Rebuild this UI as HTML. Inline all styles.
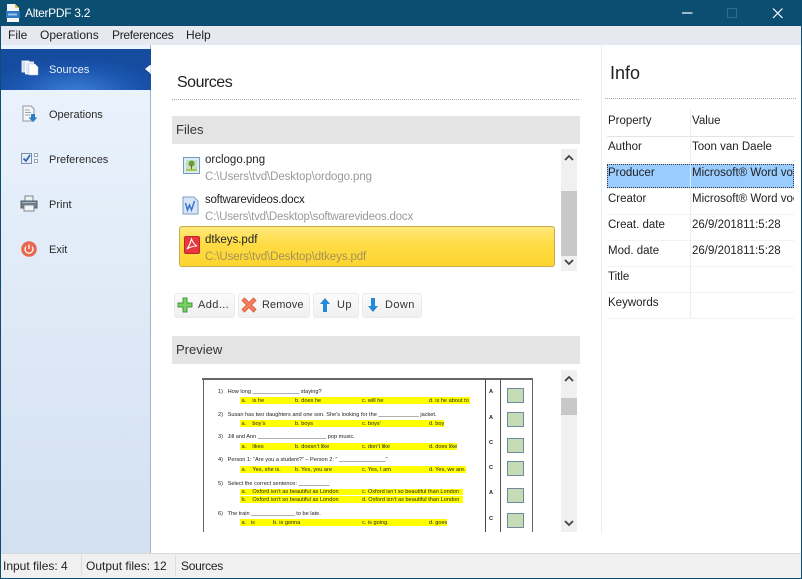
<!DOCTYPE html>
<html><head><meta charset="utf-8"><style>
html,body{margin:0;padding:0;width:802px;height:579px;overflow:hidden;background:#fff}
body{position:relative;font-family:"Liberation Sans",sans-serif;font-size:12px;color:#222}
.a{position:absolute;white-space:nowrap}
.nav{left:49px;font-size:11px;line-height:14px;color:#2a2a2a;margin-top:1px}
.m{top:28px;font-size:12px;line-height:15px;color:#222}
.hd{left:172px;width:408px;height:28px;background:#e4e4e4;font-size:13px;line-height:28px;text-indent:4px;color:#333}
.fn{left:205px;font-size:11.500px;line-height:15px;color:#222;margin-top:1px}
.gr{left:205px;color:#9a9a9a;font-size:11.500px;letter-spacing:-.1px;line-height:14px;margin-top:1px}
.btn{top:293px;height:25px;background:linear-gradient(#fbfbfb,#f0f0f0);border:1px solid #ebebeb;border-radius:3px;box-sizing:border-box}
.bt{top:298px;font-size:11px;line-height:14px;letter-spacing:.4px;color:#333}
.cell{font-size:11.500px;color:#222;line-height:26px;height:26px;margin-top:1px}
.hl{position:absolute;height:6.500px;background:#ffff00}
.q{position:absolute;font-size:5.600px;line-height:7px;color:#222;white-space:nowrap;margin-top:1px}
.sq{position:absolute;left:507px;width:15px;height:13px;background:#c6dcb6;border:1px solid #6f8a9c}
.sb{background:#f0f0f0;left:561px;width:16px}
.st{top:559px;font-size:12px;line-height:15px;color:#222}
</style></head><body>
<!-- title -->
<div class="a" style="left:0;top:0;width:802px;height:26px;background:#0b4e72"></div>
<svg class="a" style="left:5px;top:3px" width="16" height="20" viewBox="0 0 16 20"><path d="M2 1h8l4 4v14H2z" fill="#f4f6f8"/><path d="M10 1l4 4h-4z" fill="#f0c64a"/><rect x="1" y="8" width="14" height="7" fill="#2f78c4"/><rect x="3" y="10.500" width="9" height="2" fill="#9cc4ea"/></svg>
<div class="a" style="left:25px;top:4px;color:#fff;font-size:12px;line-height:18px;letter-spacing:-.3px">AlterPDF 3.2</div>
<svg class="a" style="left:670px;top:0" width="132" height="26"><path d="M12 13h10.500" stroke="#fff" stroke-width="1.200"/><rect x="57.500" y="8.500" width="9" height="9" fill="none" stroke="#2f6d8f"/><path d="M103 8.500l9.500 9.500M112.500 8.500l-9.500 9.500" stroke="#fff" stroke-width="1.200"/></svg>
<!-- menu -->
<div class="a" style="left:0;top:26px;width:802px;height:19px;background:#e7e9f1"></div>
<div class="a m" style="left:8px">File</div>
<div class="a m" style="left:40px">Operations</div>
<div class="a m" style="left:112px;letter-spacing:-.3px">Preferences</div>
<div class="a m" style="left:186px">Help</div>
<!-- sidebar -->
<div class="a" style="left:0;top:45px;width:150px;height:508px;background:linear-gradient(#ecf4fd,#d2e0f1)"></div>
<div class="a" style="left:150px;top:45px;width:1px;height:508px;background:#a3b5c9"></div>
<div class="a" style="left:0;top:49px;width:151px;height:41px;background:radial-gradient(ellipse 90px 36px at 75px 44px,#3f80d8,#1a55ae 70%,#164c9f)"></div>
<div class="a" style="left:145px;top:65px;width:0;height:0;border:4px solid transparent;border-right:5px solid #fff;border-left:0"></div>
<div class="a" style="left:150px;top:65px;width:1px;height:9px;background:#cfe0f5"></div>
<svg class="a" style="left:21px;top:60px" width="18" height="17"><rect x="1" y="1" width="7" height="11" fill="#cfdcec" stroke="#fff" stroke-width=".8"/><rect x="4.500" y="2" width="8" height="12" fill="#e0e8f4" stroke="#fff" stroke-width=".8"/><path d="M8 4h6l3 3v8H8z" fill="#fff" stroke="#b9c8da" stroke-width=".5"/></svg>
<div class="a nav" style="top:62px;color:#e8f0fb">Sources</div>
<svg class="a" style="left:21px;top:105px" width="18" height="18"><path d="M2 1h8l3 3v12H2z" fill="#f4f6f8" stroke="#8d97a3"/><path d="M4 5h5M4 7.500h6M4 10h5" stroke="#9aa6b3"/><path d="M10 9h4v3.500h2.500L12 17l-4.500-4.500H10z" fill="#2d7cc2"/></svg>
<div class="a nav" style="top:107px">Operations</div>
<svg class="a" style="left:21px;top:152px" width="18" height="14"><rect x=".5" y="1.500" width="10" height="10" fill="#e6eef8" stroke="#7b8ea3"/><path d="M2.500 6.500l2.500 2.500 4-6" fill="none" stroke="#2866b4" stroke-width="1.700"/><rect x="13.500" y="1.500" width="3" height="3" fill="#fff" stroke="#98a6b5"/><rect x="13.500" y="7.500" width="3" height="3" fill="#fff" stroke="#98a6b5"/></svg>
<div class="a nav" style="top:152px">Preferences</div>
<svg class="a" style="left:20px;top:195px" width="18" height="17"><path d="M5 1h8v6H5z" fill="#eef1f4" stroke="#7d8791"/><path d="M1 6h16v7H1z" fill="#6d7b8a" stroke="#55606c"/><rect x="4" y="10" width="10" height="6" fill="#f2f4f6" stroke="#7d8791"/><path d="M2 7.500h14" stroke="#aab5c0"/></svg>
<div class="a nav" style="top:197px">Print</div>
<svg class="a" style="left:21px;top:241px" width="16" height="16"><circle cx="8" cy="8" r="7.800" fill="#e9674d"/><path d="M5 5.500a4 4 0 1 0 6 0" fill="none" stroke="#fff" stroke-width="1.300"/><path d="M8 3.500v4.500" stroke="#fff" stroke-width="1.300"/></svg>
<div class="a nav" style="top:242px">Exit</div>
<!-- Sources -->
<div class="a" style="left:177px;top:72px;font-size:16px;line-height:21px;letter-spacing:-.5px;color:#222">Sources</div>
<div class="a" style="left:172px;top:99px;width:407px;border-top:1px dotted #a8a8a8"></div>
<div class="a hd" style="top:116px">Files</div>
<svg class="a" style="left:183px;top:157px" width="17" height="17"><rect x=".5" y=".5" width="16" height="16" fill="#dfeaf4" stroke="#6d9bc3"/><rect x="3" y="3" width="11" height="11" fill="#c3e0c0"/><circle cx="8.500" cy="6.500" r="3" fill="#6a9c3a"/><path d="M8 8h1v4H8z" fill="#7a5a30"/><path d="M3 12h11v2H3z" fill="#a7c94b"/></svg>
<div class="a fn" style="top:152px">orclogo.png</div>
<div class="a gr" style="top:169px">C:\Users\tvd\Desktop\ordogo.png</div>
<svg class="a" style="left:182px;top:196px" width="17" height="19"><path d="M1 1h11l4 4v13H1z" fill="#d8e5f6" stroke="#7e9fca"/><path d="M3.500 7l2 7 2-5 2 5 3-9" fill="none" stroke="#3d76c9" stroke-width="1.500"/></svg>
<div class="a fn" style="top:192px;letter-spacing:-.25px">softwarevideos.docx</div>
<div class="a gr" style="top:209px;letter-spacing:-.2px">C:\Users\tvd\Desktop\softwarevideos.docx</div>
<div class="a" style="left:179px;top:226px;width:376px;height:41px;box-sizing:border-box;background:linear-gradient(#ffe87a 0%,#ffdc44 45%,#fdd52f 100%);border:1px solid #c9a94e;border-radius:3px"></div>
<svg class="a" style="left:184px;top:236px" width="16" height="19"><rect x=".5" y=".5" width="15" height="17" rx="1.500" fill="#e8373f" stroke="#c3252d"/><path d="M7.500 3c-1 3-2 7-4.500 10 3-2 6-3 10-3-3-1.500-4.500-4-5.500-7z" fill="none" stroke="#fff" stroke-width="1.100"/></svg>
<div class="a fn" style="top:232px">dtkeys.pdf</div>
<div class="a gr" style="top:249px;color:#a3925a">C:\Users\tvd\Desktop\dtkeys.pdf</div>
<!-- list scrollbar -->
<div class="a sb" style="top:149px;height:122px"></div>
<div class="a" style="left:561px;top:191px;width:16px;height:65px;background:#c8c8c8"></div>
<svg class="a" style="left:561px;top:149px" width="16" height="122"><path d="M4 11l4-4 4 4M4 111l4 4 4-4" fill="none" stroke="#444" stroke-width="1.800"/></svg>
<!-- buttons -->
<div class="a btn" style="left:174px;width:61px"></div>
<svg class="a" style="left:177px;top:297px" width="16" height="16"><path d="M6 1h4v5h5v4h-5v5H6v-5H1V6h5z" fill="#7ccf63" stroke="#3d9a3b"/></svg>
<div class="a bt" style="left:198px">Add...</div>
<div class="a btn" style="left:238px;width:72px"></div>
<svg class="a" style="left:241px;top:297px" width="16" height="16"><path d="M1 3.500L3.500 1 8 5.500 12.500 1 15 3.500 10.500 8 15 12.500 12.500 15 8 10.500 3.500 15 1 12.500 5.500 8z" fill="#f2805a" stroke="#d9553a" stroke-width=".8"/></svg>
<div class="a bt" style="left:262px;letter-spacing:.1px">Remove</div>
<div class="a btn" style="left:313px;width:46px"></div>
<svg class="a" style="left:318px;top:297px" width="14" height="16"><path d="M7 1l5 6H9v8H5V7H2z" fill="#2489d8"/></svg>
<div class="a bt" style="left:337px">Up</div>
<div class="a btn" style="left:362px;width:60px"></div>
<svg class="a" style="left:366px;top:297px" width="14" height="16"><path d="M5 1h4v8h3l-5 6-5-6h3z" fill="#2489d8"/></svg>
<div class="a bt" style="left:385px">Down</div>
<div class="a hd" style="top:336px">Preview</div>
<!-- preview page -->
<div class="a" style="left:202px;top:378px;width:331px;height:2px;background:#666"></div>
<div class="a" style="left:203px;top:379px;width:1px;height:153px;background:#666"></div>
<div class="a" style="left:532px;top:379px;width:1px;height:153px;background:#666"></div>
<div class="a" style="left:485px;top:379px;width:1px;height:153px;background:#444"></div>
<div class="a" style="left:500px;top:379px;width:1px;height:153px;background:#555"></div>
<div class="a" style="left:0;top:0;width:802px;height:579px;filter:blur(.25px)">
<div class="hl" style="left:240px;top:397px;width:230px"></div>
<div class="hl" style="left:240px;top:420px;width:204px"></div>
<div class="hl" style="left:240px;top:443px;width:217px"></div>
<div class="hl" style="left:240px;top:466px;width:226px"></div>
<div class="hl" style="left:240px;top:488.500px;width:223px"></div>
<div class="hl" style="left:240px;top:496px;width:223px"></div>
<div class="hl" style="left:240px;top:519px;width:207px"></div>
<div class="q" style="left:218px;top:388px">1) &nbsp; How long _______________ staying?</div>
<div class="q" style="left:240px;top:396.500px">&nbsp;a. &nbsp; &nbsp;is he</div><div class="q" style="left:295px;top:396.500px">b. does he</div><div class="q" style="left:362px;top:396.500px">c. will he</div><div class="q" style="left:429px;top:396.500px">d. is he about to</div>
<div class="q" style="left:218px;top:411px">2) &nbsp; Susan has two daughters and one son. She’s looking for the _____________ jacket.</div>
<div class="q" style="left:240px;top:419.500px">&nbsp;a. &nbsp; &nbsp;boy’s</div><div class="q" style="left:295px;top:419.500px">b. boys</div><div class="q" style="left:362px;top:419.500px">c. boys’</div><div class="q" style="left:429px;top:419.500px">d. boy</div>
<div class="q" style="left:218px;top:433px">3) &nbsp; Jill and Ann ______________________ pop music.</div>
<div class="q" style="left:240px;top:442.500px">&nbsp;a. &nbsp; &nbsp;likes</div><div class="q" style="left:295px;top:442.500px">b. doesn’t like</div><div class="q" style="left:362px;top:442.500px">c. don’t like</div><div class="q" style="left:429px;top:442.500px">d. does like</div>
<div class="q" style="left:218px;top:456px">4) &nbsp; Person 1: “Are you a student?” – Person 2: “ _______________”</div>
<div class="q" style="left:240px;top:465.500px">&nbsp;a. &nbsp; &nbsp;Yes, she is.</div><div class="q" style="left:295px;top:465.500px">b. Yes, you are</div><div class="q" style="left:362px;top:465.500px">c. Yes, I am</div><div class="q" style="left:429px;top:465.500px">d. Yes, we are.</div>
<div class="q" style="left:218px;top:480px">5) &nbsp; Select the correct sentence: __________</div>
<div class="q" style="left:240px;top:488px">&nbsp;a. &nbsp; &nbsp;Oxford isn’t as beautiful as London</div><div class="q" style="left:362px;top:488px">c. Oxford isn’t so beautiful than London</div>
<div class="q" style="left:240px;top:495.500px">&nbsp;b. &nbsp; &nbsp;Oxford isn’t so beautiful as London</div><div class="q" style="left:362px;top:495.500px">d. Oxford isn’t as beautiful than London</div>
<div class="q" style="left:218px;top:510px">6) &nbsp; The train ______________ to be late.</div>
<div class="q" style="left:240px;top:518.500px">&nbsp;a. &nbsp; is</div><div class="q" style="left:273px;top:518.500px">b. is gonna</div><div class="q" style="left:362px;top:518.500px">c. is going.</div><div class="q" style="left:429px;top:518.500px">d. goes</div>
<b class="q" style="left:489px;top:388px">A</b><b class="q" style="left:489px;top:414px">A</b><b class="q" style="left:489px;top:439px">C</b><b class="q" style="left:489px;top:464px">C</b><b class="q" style="left:489px;top:489px">A</b><b class="q" style="left:489px;top:515px">C</b>
<div class="sq" style="left:507px;top:388px"></div><div class="sq" style="left:507px;top:412px"></div><div class="sq" style="left:507px;top:438px"></div><div class="sq" style="left:507px;top:461px"></div><div class="sq" style="left:507px;top:488px"></div><div class="sq" style="left:507px;top:513px"></div>
</div>
<!-- preview scrollbar -->
<div class="a sb" style="top:370px;height:162px"></div>
<div class="a" style="left:561px;top:398px;width:16px;height:17px;background:#c8c8c8"></div>
<svg class="a" style="left:561px;top:370px" width="16" height="162"><path d="M4 11l4-4 4 4M4 151l4 4 4-4" fill="none" stroke="#444" stroke-width="1.800"/></svg>
<!-- Info -->
<div class="a" style="left:601px;top:45px;width:1px;height:488px;background:#e6eef5"></div>
<div class="a" style="left:610px;top:63px;font-size:18px;line-height:21px;color:#222">Info</div>
<div class="a" style="left:605px;top:98px;width:191px;border-top:1px dotted #a8a8a8"></div>
<div class="a" style="left:690px;top:110px;width:1px;height:208px;background:#ececec"></div>
<div class="a" style="left:607px;top:136px;width:187px;height:1px;background:#e4e4e4"></div>
<div class="a" style="left:607px;top:162px;width:187px;height:1px;background:#f2f2f2"></div>
<div class="a" style="left:607px;top:188px;width:187px;height:1px;background:#f2f2f2"></div>
<div class="a" style="left:607px;top:214px;width:187px;height:1px;background:#f2f2f2"></div>
<div class="a" style="left:607px;top:240px;width:187px;height:1px;background:#f2f2f2"></div>
<div class="a" style="left:607px;top:266px;width:187px;height:1px;background:#f2f2f2"></div>
<div class="a" style="left:607px;top:292px;width:187px;height:1px;background:#f2f2f2"></div>
<div class="a" style="left:607px;top:318px;width:187px;height:1px;background:#f2f2f2"></div>
<div class="a" style="left:607px;top:164px;width:187px;height:24px;box-sizing:border-box;background:#99ccff;border:1px dotted #334"></div>
<div class="a" style="left:690px;top:164px;width:1px;height:24px;background:#dceaf8"></div>
<div class="a cell" style="left:608px;top:107px">Property</div><div class="a cell" style="left:692px;top:107px">Value</div>
<div class="a cell" style="left:608px;top:133px">Author</div><div class="a cell" style="left:692px;top:133px">Toon van Daele</div>
<div class="a cell" style="left:608px;top:159px">Producer</div><div class="a cell" style="left:692px;top:159px;width:101px;overflow:hidden">Microsoft® Word voor Office</div>
<div class="a cell" style="left:608px;top:185px">Creator</div><div class="a cell" style="left:692px;top:185px;width:102px;overflow:hidden">Microsoft® Word voor Office</div>
<div class="a cell" style="left:608px;top:211px">Creat. date</div><div class="a cell" style="left:692px;top:211px">26/9/201811:5:28</div>
<div class="a cell" style="left:608px;top:237px">Mod. date</div><div class="a cell" style="left:692px;top:237px">26/9/201811:5:28</div>
<div class="a cell" style="left:608px;top:263px">Title</div>
<div class="a cell" style="left:608px;top:289px">Keywords</div>
<!-- status -->
<div class="a" style="left:0;top:553px;width:802px;height:25px;background:#f0f0f0;border-top:1px solid #d8d8d8;box-sizing:border-box"></div>
<div class="a" style="left:81px;top:555px;width:1px;height:21px;background:#dcdcdc"></div>
<div class="a" style="left:175px;top:555px;width:1px;height:21px;background:#dcdcdc"></div>
<div class="a st" style="left:3px">Input files: 4</div>
<div class="a st" style="left:86px">Output files: 12</div>
<div class="a st" style="left:181px;letter-spacing:-.3px">Sources</div>
<!-- window border -->
<div class="a" style="left:0;top:26px;width:1px;height:553px;background:#0b4e72"></div>
<div class="a" style="left:801px;top:26px;width:1px;height:553px;background:#0b4e72"></div>
<div class="a" style="left:0;top:578px;width:802px;height:1px;background:#0b4e72"></div>
</body></html>
